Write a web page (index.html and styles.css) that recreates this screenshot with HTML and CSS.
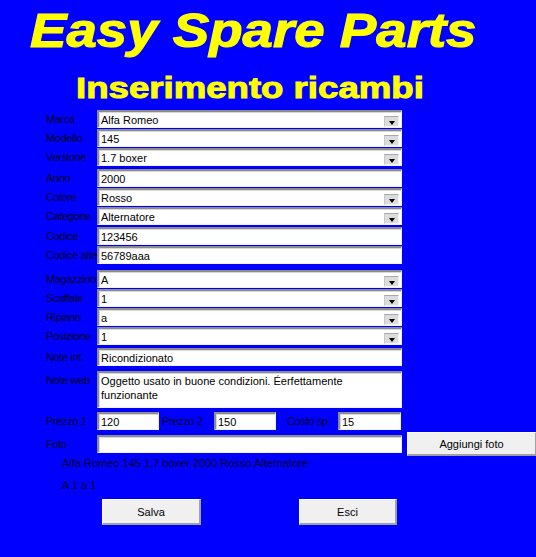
FILE: index.html
```html
<!DOCTYPE html>
<html lang="it">
<head>
<meta charset="utf-8">
<title>Easy Spare Parts</title>
<link rel="stylesheet" href="styles.css">
</head>
<body>
<div class="page">
  <header class="head">
    <h1 class="title">Easy Spare Parts</h1>
    <h2 class="subtitle">Inserimento ricambi</h2>
  </header>

  <div class="form">
    <div class="group">
      <div class="row"><span class="lbl">Marca</span><div class="field combo"><span class="val">Alfa Romeo</span><span class="drop"><span class="tri"></span></span></div></div>
      <div class="row"><span class="lbl">Modello</span><div class="field combo"><span class="val">145</span><span class="drop"><span class="tri"></span></span></div></div>
      <div class="row"><span class="lbl">Versione</span><div class="field combo"><span class="val">1.7 boxer</span><span class="drop"><span class="tri"></span></span></div></div>
    </div>
    <div class="group g3">
      <div class="row"><span class="lbl">Anno</span><div class="field"><span class="val">2000</span></div></div>
      <div class="row"><span class="lbl">Colore</span><div class="field combo"><span class="val">Rosso</span><span class="drop"><span class="tri"></span></span></div></div>
      <div class="row"><span class="lbl">Categorie</span><div class="field combo"><span class="val">Alternatore</span><span class="drop"><span class="tri"></span></span></div></div>
    </div>
    <div class="group g2">
      <div class="row"><span class="lbl">Codice</span><div class="field"><span class="val">123456</span></div></div>
      <div class="row"><span class="lbl">Codice alternativo</span><div class="field"><span class="val">56789aaa</span></div></div>
    </div>
    <div class="group g6">
      <div class="row"><span class="lbl">Magazzino</span><div class="field combo"><span class="val">A</span><span class="drop"><span class="tri"></span></span></div></div>
      <div class="row"><span class="lbl">Scaffale</span><div class="field combo"><span class="val">1</span><span class="drop"><span class="tri"></span></span></div></div>
      <div class="row"><span class="lbl">Ripiano</span><div class="field combo"><span class="val">a</span><span class="drop"><span class="tri"></span></span></div></div>
      <div class="row"><span class="lbl">Posizione</span><div class="field combo"><span class="val">1</span><span class="drop"><span class="tri"></span></span></div></div>
    </div>
    <div class="group g3">
      <div class="row"><span class="lbl">Note int.</span><div class="field"><span class="val">Ricondizionato</span></div></div>
    </div>
    <div class="group g5">
      <div class="row tall"><span class="lbl">Note web</span><div class="field area"><span class="val">Oggetto usato in buone condizioni. Éerfettamente<br>funzionante</span></div></div>
    </div>
    <div class="group g4">
      <div class="row">
        <span class="lbl">Prezzo 1</span><div class="field small"><span class="val">120</span></div>
        <span class="lbl lbl2">Prezzo 2</span><div class="field small"><span class="val">150</span></div>
        <span class="lbl lbl3">Costo sp.</span><div class="field small s3"><span class="val">15</span></div>
      </div>
    </div>
    <div class="row fotorow">
      <span class="lbl">Foto</span><div class="field"><span class="val"></span></div>
      <button class="btn addbtn" type="button">Aggiungi foto</button>
    </div>
    <div class="info">Alfa Romeo 145 1.7 boxer 2000 Rosso Alternatore</div>
    <div class="info info2">A 1 a 1</div>
    <div class="actions">
      <button class="btn act" type="button">Salva</button>
      <button class="btn act esci" type="button">Esci</button>
    </div>
  </div>
</div>
</body>
</html>
```

FILE: styles.css
```css
html, body {
  margin: 0;
  padding: 0;
  background: #0000ff;
}

.page {
  width: 536px;
  height: 557px;
  overflow: hidden;
  font-family: "Liberation Sans", Arial, sans-serif;
  font-size: 11px;
  color: #00001e;
}

.head {
  padding-top: 6px;
}

.title {
  margin: 0 0 0 30px;
  font-family: "Liberation Sans", Arial, sans-serif;
  font-size: 49px;
  line-height: 49px;
  font-weight: bold;
  font-style: italic;
  color: #ffff00;
  -webkit-text-stroke: 1.1px #ffff00;
  white-space: nowrap;
  transform: scaleX(1.115);
  transform-origin: left center;
}

.subtitle {
  margin: 18px 0 0 76px;
  font-family: "Liberation Sans", Arial, sans-serif;
  font-size: 30px;
  line-height: 30px;
  font-weight: bold;
  color: #ffff00;
  -webkit-text-stroke: 1px #ffff00;
  white-space: nowrap;
  transform: scaleX(1.22);
  transform-origin: left center;
}

.form {
  margin-top: 7px;
  padding-left: 46px;
}

.group {
  display: flex;
  flex-direction: column;
  gap: 1px;
}

.g2 { margin-top: 2px; }
.g3 { margin-top: 3px; }
.g4 { margin-top: 4px; }
.g5 { margin-top: 5px; }
.g6 { margin-top: 6px; }

.row {
  display: flex;
  align-items: center;
  height: 18px;
}

.row.tall {
  height: 37px;
  align-items: flex-start;
}

.lbl {
  width: 51px;
  flex: none;
  overflow: hidden;
  white-space: nowrap;
  line-height: 14px;
  letter-spacing: -0.35px;
}

.row.tall .lbl {
  padding-top: 2px;
}

.lbl2 {
  margin-left: 3px;
  width: 52px;
}

.lbl3 {
  margin-left: 11px;
  width: 51px;
}

.field {
  box-sizing: border-box;
  width: 305px;
  height: 18px;
  flex: none;
  display: flex;
  align-items: center;
  background: #ffffff;
  border-top: 2px solid #8c8c8c;
  border-left: 2px solid #8c8c8c;
  border-right: 1px solid #f0f0f0;
  border-bottom: 1px solid #f0f0f0;
  box-shadow: inset 1px 1px 0 #d8d8d8;
  color: #000000;
  letter-spacing: 0;
}

.field .val {
  flex: 1;
  padding-left: 2px;
  line-height: 14px;
  white-space: nowrap;
  overflow: hidden;
}

.field.combo {
  align-items: stretch;
}

.field.combo .val {
  align-self: center;
}

.drop {
  flex: none;
  box-sizing: border-box;
  width: 15px;
  height: 11px;
  margin: 4px 2px 0 0;
  background: #dcdcdc;
  border-top: 1px solid #a8a8a8;
  border-left: 1px solid #c8c8c8;
  border-right: 1px solid #f4f4f4;
  border-bottom: 1px solid #f4f4f4;
  display: flex;
  align-items: center;
  justify-content: center;
}

.tri {
  width: 0;
  height: 0;
  margin-top: 2px;
  border-left: 3px solid transparent;
  border-right: 3px solid transparent;
  border-top: 4px solid #000000;
}

.field.area {
  height: 37px;
  align-items: flex-start;
}

.field.area .val {
  white-space: normal;
  padding-top: 1px;
  line-height: 14px;
}

.field.small {
  width: 62px;
}

.field.small.s3 {
  width: 63px;
}

.fotorow {
  margin-top: 2px;
  height: 24px;
}

.btn {
  box-sizing: border-box;
  font-family: "Liberation Sans", Arial, sans-serif;
  font-size: 11px;
  color: #000000;
  background: #f0f0f0;
  border-top: 1px solid #fcfcfc;
  border-left: 1px solid #fcfcfc;
  border-right: 2px solid #a0a0a0;
  border-bottom: 2px solid #a0a0a0;
  padding: 0;
  margin: 0;
  text-align: center;
  line-height: 14px;
}

.addbtn {
  width: 130px;
  height: 24px;
  margin-left: 5px;
  flex: none;
}

.info {
  padding-left: 16px;
  height: 14px;
  line-height: 14px;
  margin-top: 0;
  white-space: nowrap;
}

.info2 {
  margin-top: 8px;
}

.actions {
  display: flex;
  margin-top: 7px;
  padding-left: 56px;
  gap: 98px;
}

.act {
  width: 99px;
  height: 26px;
}

.act.esci {
  width: 98px;
}
```
